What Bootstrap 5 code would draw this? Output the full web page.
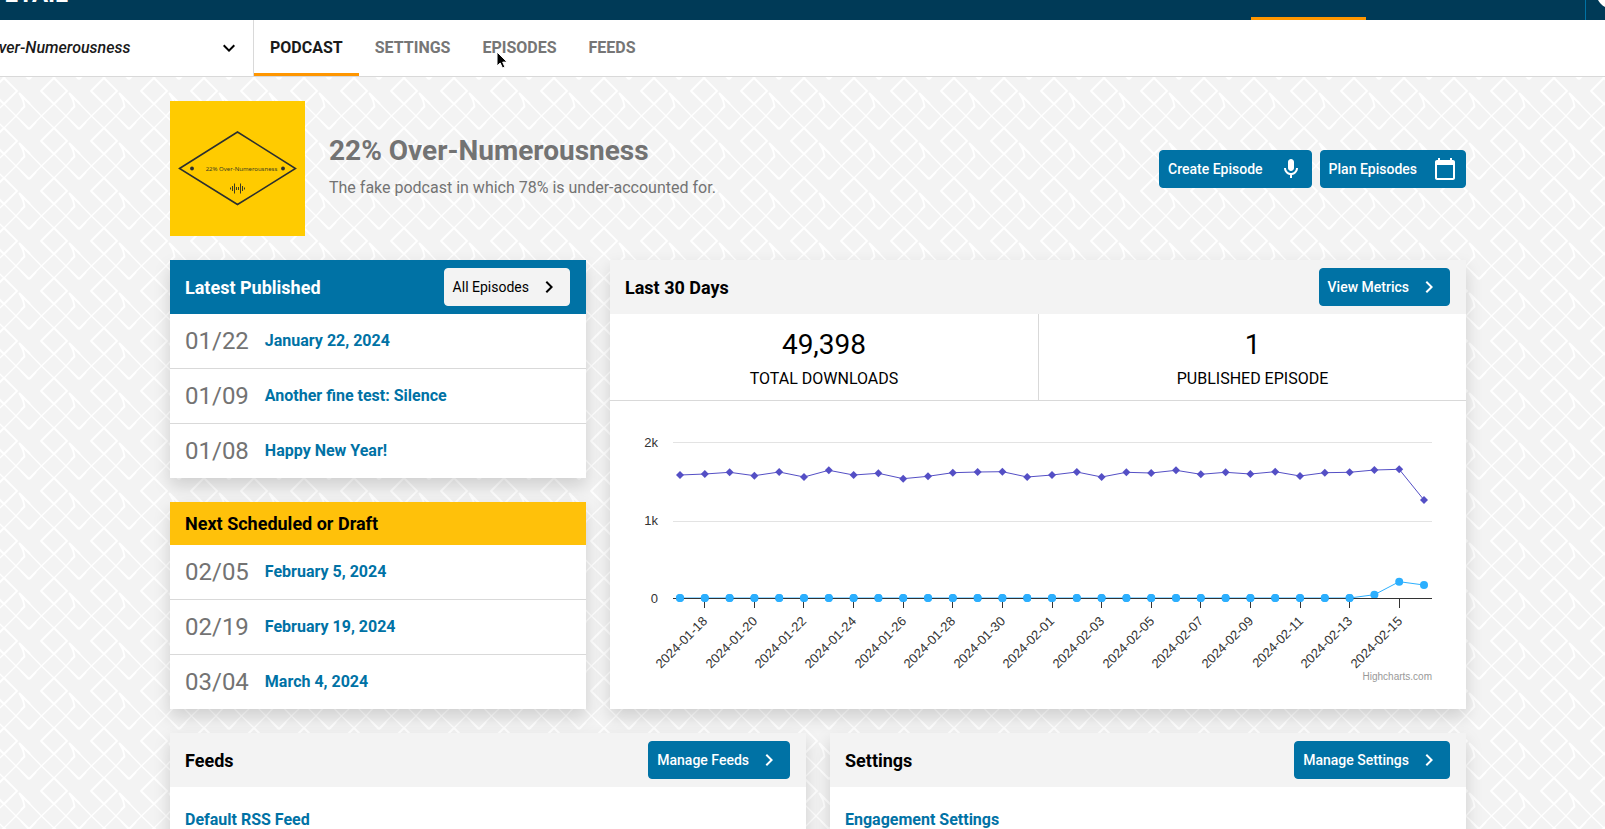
<!DOCTYPE html>
<html lang="en">
<head>
<meta charset="utf-8">
<meta name="viewport" content="width=device-width, initial-scale=1">
<title>22% Over-Numerousness</title>
<link href="https://cdn.jsdelivr.net/npm/bootstrap@5.3.0/dist/css/bootstrap.min.css" rel="stylesheet">
<style>
:root { --brand: #0072a5; --navy: #003a57; --mist: #f3f3f3; --rule: #d9d9d9; --accent: #ff9600; --muted: #737373; }
body {
  font-family: Roboto, "Liberation Sans", sans-serif; color: #000; height: 100vh; overflow: hidden;
  background: var(--mist) url("data:image/svg+xml,%3Csvg xmlns='http://www.w3.org/2000/svg' width='50' height='50' fill='none' stroke='%23fff' stroke-linejoin='round'%3E%3Cg stroke-width='1.3'%3E%3Cpath d='M0 0 13 12.500 25.500 0 38 12 50 0M25.500 50 38 38 50 50M0 50 8.500 40.500M3.500 27.500 25.500 50'/%3E%3C/g%3E%3Cg stroke-width='1.800'%3E%3Cpath d='M5 5 11.500 12Q13 13.500 14.500 12L20 6M38 12 51 25 38 38 25 25ZM-12 12 1 25-12 38M5 44 8.500 40.500 7 34 3.500 27.500 14 38'/%3E%3C/g%3E%3C/svg%3E") 16px 16px;
}
a { color: var(--brand); text-decoration: none; }
.topbar { height: 80px; margin-top: -60px; background: var(--navy); overflow: hidden; }
.brand-name { font-size: 24px; font-weight: 700; line-height: 24px; color: #fff; margin-left: -43px; padding-bottom: 14px; }
.top-active { width: 115px; border-bottom: 3px solid var(--accent); }
.top-user { width: 239px; }
.top-user-cell { width: 20px; border-left: 1px solid var(--brand); overflow: hidden; padding-left: 10px; padding-bottom: 11px; }
.avatar { width: 34px; height: 34px; border-radius: 50%; background: #fff; }
.subbar { height: 57px; border-bottom: 1px solid var(--rule); }
.picker { width: 304px; margin-left: -50px; border: 0; border-right: 1px solid var(--rule); font-style: italic; font-weight: 500; color: #1a1a1a; padding: 0 12px 0 5px; background: #fff; white-space: nowrap; }
.tabs .nav-link { padding: 2px 16px 0; line-height: 51px; font-weight: 700; color: #767676; border-bottom: 3px solid transparent; border-radius: 0; }
.tabs .nav-link.active { color: #1a1a1a; border-bottom-color: var(--accent); }
.pointer { left: 496px; top: 51px; z-index: 5; }
.stage { margin-left: 31px; }
.art { width: 135px; height: 135px; }
.show-title { font-size: 28px; font-weight: 700; line-height: 34px; color: var(--muted); }
.show-note { color: var(--muted); }
.btn { font-size: 14px; font-weight: 500; line-height: 20px; padding: 6px 8px; height: 38px; border-radius: 4px; display: inline-flex; align-items: center; gap: 8px; }
.btn svg { fill: currentColor; }
.btn-brand, .btn-brand:hover { background: var(--brand); border-color: var(--brand); color: #fff; }
.btn-pale, .btn-pale:hover { background: var(--mist); border-color: var(--mist); color: #000; font-weight: 400; }
.card { border: 0; border-radius: 0; box-shadow: 0 8px 16px rgba(0,0,0,.15); }
.card-header { border: 0; border-radius: 0 !important; background: var(--mist); padding: 8px 15px; }
.card-header .btn { margin-right: 1px; }
.card-header h2 { font-size: 18px; line-height: 27px; font-weight: 700; margin: 0; }
.head-brand { background: var(--brand); color: #fff; }
.head-warn { background: #ffc10a; }
.list-group-item { min-height: 54px; padding: 0 15px; border-color: var(--rule); font-weight: 700; box-sizing: content-box; }
.day { font-size: 24px; line-height: 36px; font-weight: 400; color: var(--muted); }
.stats { border-bottom: 1px solid var(--rule); }
.stat + .stat { border-left: 1px solid var(--rule); }
.stat { padding: 10px 0 8px; }
.stat strong { font-size: 28px; line-height: 42px; font-weight: 400; display: block; }
.stat span { line-height: 26px; display: block; text-transform: uppercase; }
.chart { font-family: "Liberation Sans", sans-serif; font-size: 13px; fill: #333; display: block; width: 100%; height: auto; }
.card-link-body { padding: 21px 15px; font-weight: 700; min-height: 90px; }
</style>
</head>
<body>
<header class="topbar d-flex align-items-stretch">
  <div class="brand-name align-self-end">DOVETAIL</div>
  <a href="#" class="top-active ms-auto" aria-label="Podcasts"></a>
  <div class="top-user d-flex justify-content-end">
    <div class="top-user-cell d-flex align-items-end"><div class="avatar flex-shrink-0"></div></div>
  </div>
</header>
<nav class="subbar bg-white d-flex">
  <button type="button" class="picker d-flex align-items-center justify-content-between">
    22% Over-Numerousness
    <svg width="24" height="24" viewBox="0 0 24 24"><path d="M16.590 8.590 12 13.170 7.410 8.590 6 10l6 6 6-6z"/></svg>
  </button>
  <div class="tabs nav">
    <a class="nav-link active" href="#">PODCAST</a>
    <a class="nav-link" href="#">SETTINGS</a>
    <a class="nav-link" href="#">EPISODES</a>
    <a class="nav-link" href="#">FEEDS</a>
  </div>
</nav>
<svg class="pointer position-absolute" width="14" height="20" viewBox="0 0 14 20"><path d="M1 1v14l3.200-3 2.300 5 2.400-1-2.200-4.900h4.500z" fill="#000" stroke="#fff" stroke-width="1"/></svg>

<main class="stage">
<div class="container-xxl">
  <div class="d-flex align-items-center py-4">
    <svg class="art flex-shrink-0" viewBox="0 0 135 135" role="img" aria-label="Podcast artwork">
      <path fill="#ffcb00" d="M0 0h135v135H0z"/>
      <path d="M9.500 67.500 67.500 31l58 36.500-58 36z" fill="none" stroke="#2b2f30" stroke-width="1.500"/>
      <circle cx="22" cy="67.500" r="1.900" fill="#2b2f30"/><circle cx="113" cy="67.500" r="1.900" fill="#2b2f30"/>
      <text x="71.500" y="70" text-anchor="middle" font-family="Noto Sans, sans-serif" font-size="6" fill="#3c3c22">22% Over-Numerousness</text>
      <path d="M60.500 86.500v2M62.500 85v5M64.500 82.500v10M66.500 86v3M68.500 86v3M70.500 82.500v10M72.500 85v5M74.500 86.500v2" stroke="#3c3c22"/>
    </svg>
    <div class="ms-4 me-auto pb-1">
      <h1 class="show-title mb-2">22% Over-Numerousness</h1>
      <p class="show-note m-0">The fake podcast in which 78% is under-accounted for.</p>
    </div>
    <div class="d-flex gap-2">
      <button type="button" class="btn btn-brand gap-3">Create Episode
        <svg width="24" height="24" viewBox="0 0 24 24"><path d="M12 14c1.660 0 3-1.340 3-3V5c0-1.660-1.340-3-3-3S9 3.340 9 5v6c0 1.660 1.340 3 3 3zm5-3c0 2.760-2.240 5-5 5s-5-2.240-5-5H5c0 3.530 2.610 6.430 6 6.920V21h2v-3.080c3.390-.49 6-3.390 6-6.920z"/></svg></button>
      <button type="button" class="btn btn-brand gap-3">Plan Episodes
        <svg width="24" height="24" viewBox="0 0 24 24"><path d="M20 3h-1V1h-2v2H7V1H5v2H4c-1.100 0-2 .9-2 2v16c0 1.100.9 2 2 2h16c1.100 0 2-.9 2-2V5c0-1.100-.9-2-2-2zm0 18H4V8h16z"/></svg></button>
    </div>
  </div>

  <div class="row g-4">
    <div class="col-4 d-flex flex-column gap-4">
      <section class="card">
        <div class="card-header head-brand d-flex align-items-center justify-content-between">
          <h2>Latest Published</h2>
          <button type="button" class="btn btn-pale">All Episodes
            <svg width="24" height="24" viewBox="0 0 24 24"><path d="M10 6 8.590 7.410 13.170 12l-4.580 4.590L10 18l6-6z"/></svg></button>
        </div>
        <ul class="list-group list-group-flush">
          <li class="list-group-item d-flex align-items-center gap-3"><span class="day">01/22</span><a href="#">January 22, 2024</a></li>
          <li class="list-group-item d-flex align-items-center gap-3"><span class="day">01/09</span><a href="#">Another fine test: Silence</a></li>
          <li class="list-group-item d-flex align-items-center gap-3"><span class="day">01/08</span><a href="#">Happy New Year!</a></li>
        </ul>
      </section>
      <section class="card">
        <div class="card-header head-warn"><h2>Next Scheduled or Draft</h2></div>
        <ul class="list-group list-group-flush">
          <li class="list-group-item d-flex align-items-center gap-3"><span class="day">02/05</span><a href="#">February 5, 2024</a></li>
          <li class="list-group-item d-flex align-items-center gap-3"><span class="day">02/19</span><a href="#">February 19, 2024</a></li>
          <li class="list-group-item d-flex align-items-center gap-3"><span class="day">03/04</span><a href="#">March 4, 2024</a></li>
        </ul>
      </section>
    </div>
    <div class="col-8">
      <section class="card h-100">
        <div class="card-header d-flex align-items-center justify-content-between">
          <h2>Last 30 Days</h2>
          <button type="button" class="btn btn-brand">View Metrics
            <svg width="24" height="24" viewBox="0 0 24 24"><path d="M10 6 8.590 7.410 13.170 12l-4.580 4.590L10 18l6-6z"/></svg></button>
        </div>
        <div class="stats row g-0 text-center">
          <div class="stat col-6"><strong>49,398</strong><span>Total Downloads</span></div>
          <div class="stat col-6"><strong>1</strong><span>Published Episode</span></div>
        </div>
        <svg class="chart" viewBox="0 0 856 306">
          <defs>
            <marker id="gem" markerUnits="userSpaceOnUse" markerWidth="10" markerHeight="10" refX="5" refY="5"><path d="M5 1 9 5 5 9 1 5z" fill="#544fc5"/></marker>
            <marker id="dot" markerUnits="userSpaceOnUse" markerWidth="10" markerHeight="10" refX="5" refY="5"><circle cx="5" cy="5" r="4" fill="#2caffe"/></marker>
          </defs>
          <path d="M63 41.500H822M63 120.500H822" stroke="#e3e3e3"/>
          <polyline fill="none" stroke="#2caffe" marker-start="url(#dot)" marker-mid="url(#dot)" marker-end="url(#dot)" points="70,197 94.800,197 119.600,197 144.400,197 169.200,197 194,197 218.800,197 243.600,197 268.400,197 293.200,197 318,197 342.800,197 367.600,197 392.400,197 417.200,197 442,197 466.800,197 491.600,197 516.400,197 541.200,197 566,197 590.800,197 615.600,197 640.400,197 665.200,197 690,197 714.800,197 739.600,197 764.400,193.700 789.200,180.700 814,184"/>
          <path d="M63 197.500H822M94.500 198v9M144.500 198v9M193.500 198v9M243.500 198v9M293.500 198v9M342.500 198v9M392.500 198v9M442.500 198v9M491.500 198v9M541.500 198v9M590.500 198v9M640.500 198v9M690.500 198v9M739.500 198v9M789.500 198v9" stroke="#333"/>
          <polyline fill="none" stroke="none" marker-start="url(#dot)" marker-mid="url(#dot)" marker-end="url(#dot)" points="70,197 94.800,197 119.600,197 144.400,197 169.200,197 194,197 218.800,197 243.600,197 268.400,197 293.200,197 318,197 342.800,197 367.600,197 392.400,197 417.200,197 442,197 466.800,197 491.600,197 516.400,197 541.200,197 566,197 590.800,197 615.600,197 640.400,197 665.200,197 690,197 714.800,197 739.600,197"/>
          <polyline fill="none" stroke="#544fc5" marker-start="url(#gem)" marker-mid="url(#gem)" marker-end="url(#gem)" points="70,74 94.800,73 119.600,71.300 144.400,74.700 169.200,71 194,76 218.800,69.300 243.600,74 268.400,72.300 293.200,77.700 318,75.300 342.800,71.700 367.600,71 392.400,70.700 417.200,76 442,74 466.800,71 491.600,76 516.400,71.300 541.200,72 566,69.300 590.800,73.300 615.600,71.300 640.400,73 665.200,70.700 690,75 714.800,71.700 739.600,71.300 764.400,69 789.200,68.300 814,99"/>
          <g text-anchor="end">
            <text x="48" y="46">2k</text><text x="48" y="124">1k</text><text x="48" y="202">0</text>
            <text transform="translate(98 221) rotate(-45)">2024-01-18</text>
            <text transform="translate(148 221) rotate(-45)">2024-01-20</text>
            <text transform="translate(197 221) rotate(-45)">2024-01-22</text>
            <text transform="translate(247 221) rotate(-45)">2024-01-24</text>
            <text transform="translate(297 221) rotate(-45)">2024-01-26</text>
            <text transform="translate(346 221) rotate(-45)">2024-01-28</text>
            <text transform="translate(396 221) rotate(-45)">2024-01-30</text>
            <text transform="translate(445 221) rotate(-45)">2024-02-01</text>
            <text transform="translate(495 221) rotate(-45)">2024-02-03</text>
            <text transform="translate(545 221) rotate(-45)">2024-02-05</text>
            <text transform="translate(594 221) rotate(-45)">2024-02-07</text>
            <text transform="translate(644 221) rotate(-45)">2024-02-09</text>
            <text transform="translate(694 221) rotate(-45)">2024-02-11</text>
            <text transform="translate(743 221) rotate(-45)">2024-02-13</text>
            <text transform="translate(793 221) rotate(-45)">2024-02-15</text>
            <a href="#"><text x="822" y="279" font-size="10" fill="#999">Highcharts.com</text></a>
          </g>
        </svg>
      </section>
    </div>
    <div class="col-6">
      <section class="card">
        <div class="card-header d-flex align-items-center justify-content-between">
          <h2>Feeds</h2>
          <button type="button" class="btn btn-brand">Manage Feeds
            <svg width="24" height="24" viewBox="0 0 24 24"><path d="M10 6 8.590 7.410 13.170 12l-4.580 4.590L10 18l6-6z"/></svg></button>
        </div>
        <div class="card-link-body"><a href="#">Default RSS Feed</a></div>
      </section>
    </div>
    <div class="col-6">
      <section class="card">
        <div class="card-header d-flex align-items-center justify-content-between">
          <h2>Settings</h2>
          <button type="button" class="btn btn-brand">Manage Settings
            <svg width="24" height="24" viewBox="0 0 24 24"><path d="M10 6 8.590 7.410 13.170 12l-4.580 4.590L10 18l6-6z"/></svg></button>
        </div>
        <div class="card-link-body"><a href="#">Engagement Settings</a></div>
      </section>
    </div>
  </div>
</div>
</main>
<script src="https://cdn.jsdelivr.net/npm/bootstrap@5.3.0/dist/js/bootstrap.bundle.min.js"></script>
</body>
</html>
